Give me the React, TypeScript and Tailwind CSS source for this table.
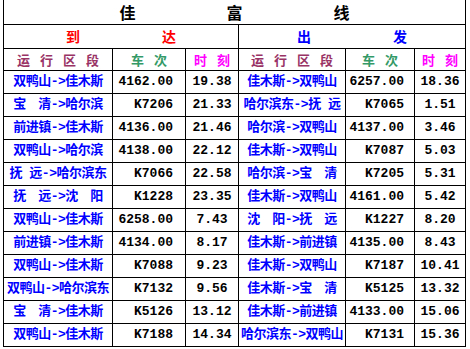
import React from "react";

const left: [string, string, string][] = [
  ["双鸭山->佳木斯", "4162.00", "19.38"],
  ["宝\u3000清->哈尔滨", "K7206", "21.33"],
  ["前进镇->佳木斯", "4136.00", "21.46"],
  ["双鸭山->哈尔滨", "4138.00", "22.12"],
  ["抚 远->哈尔滨东", "K7066", "22.58"],
  ["抚\u3000远->沈\u3000阳", "K1228", "23.35"],
  ["双鸭山->佳木斯", "6258.00", "7.43"],
  ["前进镇->佳木斯", "4134.00", "8.17"],
  ["双鸭山->佳木斯", "K7088", "9.23"],
  ["双鸭山->哈尔滨东", "K7132", "9.56"],
  ["宝\u3000清->佳木斯", "K5126", "13.12"],
  ["双鸭山->佳木斯", "K7188", "14.34"],
];

const right: [string, string, string][] = [
  ["佳木斯->双鸭山", "6257.00", "18.36"],
  ["哈尔滨东->抚 远", "K7065", "1.51"],
  ["哈尔滨->双鸭山", "4137.00", "3.46"],
  ["佳木斯->双鸭山", "K7087", "5.03"],
  ["哈尔滨->宝\u3000清", "K7205", "5.31"],
  ["佳木斯->双鸭山", "4161.00", "5.42"],
  ["沈\u3000阳->抚\u3000远", "K1227", "8.20"],
  ["佳木斯->前进镇", "4135.00", "8.43"],
  ["佳木斯->双鸭山", "K7187", "10.41"],
  ["佳木斯->宝\u3000清", "K5125", "13.32"],
  ["佳木斯->前进镇", "4133.00", "15.06"],
  ["哈尔滨东->双鸭山", "K7131", "15.36"],
];

const cell = "border-r border-b border-black flex items-center overflow-hidden";
const cjk = "font-['Noto_Sans_CJK_SC','Noto_Sans',sans-serif]";
const route =
  "font-['Liberation_Mono','Noto_Sans_CJK_SC',monospace] justify-center whitespace-nowrap text-[13px] font-bold text-[#0000ff] tracking-[-0.5px]";
const mono = "font-['Liberation_Mono','DejaVu_Sans_Mono',monospace] text-[13px] font-bold text-black";

const cols = [
  { t: ["运", "行", "区", "段"], c: "text-[#993366]" },
  { t: ["车", "次"], c: "text-[#339966]" },
  { t: ["时", "刻"], c: "text-[#ff00ff]" },
];

function Header() {
  return (
    <>
      {[0, 1].map((s) =>
        cols.map((col, i) => (
          <div
            key={`${s}-${i}`}
            className={`${cell} ${cjk} justify-center gap-[10px] text-[13px] font-bold ${col.c}`}
          >
            {col.t.map((ch) => (
              <span key={ch}>{ch}</span>
            ))}
          </div>
        ))
      )}
    </>
  );
}

export default function App() {
  return (
    <div className="w-[470px] h-[349px] bg-white overflow-hidden">
      <div className="ml-[3px] grid border-l border-black grid-cols-[109px_73px_53px_107px_69px_51px] grid-rows-[25px_24px_22px_repeat(12,23px)]">
        <div className={`${cell} ${cjk} col-span-6 justify-center gap-[91px] text-[16px] font-bold text-black`}>
          <span>佳</span>
          <span>富</span>
          <span>线</span>
        </div>
        <div className={`${cell} ${cjk} col-span-3 justify-center gap-[82px] text-[14px] font-bold text-[#ff0000]`}>
          <span>到</span>
          <span>达</span>
        </div>
        <div className={`${cell} ${cjk} col-span-3 justify-center gap-[82px] text-[14px] font-bold text-[#0000ff]`}>
          <span>出</span>
          <span>发</span>
        </div>
        <Header />
        {left.map((l, i) => {
          const r = right[i];
          return (
            <React.Fragment key={i}>
              <div className={`${cell} ${route}`}>{l[0]}</div>
              <div className={`${cell} ${mono} justify-end pr-[12px]`}>{l[1]}</div>
              <div className={`${cell} ${mono} justify-center`}>{l[2]}</div>
              <div className={`${cell} ${route}`}>{r[0]}</div>
              <div className={`${cell} ${mono} justify-end pr-[10px]`}>{r[1]}</div>
              <div className={`${cell} ${mono} justify-center`}>{r[2]}</div>
            </React.Fragment>
          );
        })}
      </div>
    </div>
  );
}
